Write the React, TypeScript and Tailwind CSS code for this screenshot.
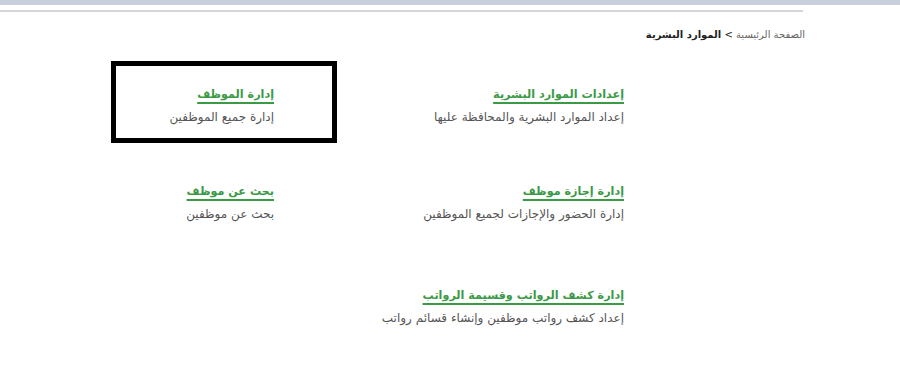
const ITEMS = [
  [
    { title: 'إعدادات الموارد البشرية', desc: 'إعداد الموارد البشرية والمحافظة عليها' },
    { title: 'إدارة الموظف', desc: 'إدارة جميع الموظفين', active: true },
  ],
  [
    { title: 'إدارة إجازة موظف', desc: 'إدارة الحضور والإجازات لجميع الموظفين' },
    { title: 'بحث عن موظف', desc: 'بحث عن موظفين' },
  ],
  [{ title: 'إدارة كشف الرواتب وقسيمة الرواتب', desc: 'إعداد كشف رواتب موظفين وإنشاء قسائم رواتب' }],
];

const ROW_GAPS = ['mt-0', 'mt-[15px]', 'mt-[22px]'];

type Item = { title: string; desc: string; active?: boolean };

function Cell({ item, wide }: { item: Item; wide?: boolean }) {
  return (
    <div
      className={`h-[82px] border-[5px] pt-[20px] ${item.active ? 'border-black' : 'border-transparent'} ${
        wide ? 'w-[292px]' : 'w-[226px] pr-[58px]'
      }`}
    >
      <a href="#" className="block text-[11.2px] leading-[18px] font-bold text-[#3a9a46] underline underline-offset-[4px] decoration-[1.5px] w-fit">
        {item.title}
      </a>
      <div className="mt-[4px] text-[12px] leading-[18px] text-[#555]">{item.desc}</div>
    </div>
  );
}

export default function App() {
  return (
    <div className="w-[900px] h-[365px] bg-white overflow-hidden" style={{ fontFamily: '"DejaVu Sans", Arial, sans-serif' }}>
      <div className="h-[5px] bg-[#c9cfdd]" />
      <div className="mt-[5px] h-[2px] w-[803px] bg-[#d6d6d6]" />
      <div dir="rtl" className="w-[805px]">
        <div className="pt-[15px] text-[10px] leading-[16px]">
          <span className="text-[#666]">الصفحة الرئيسية</span>
          <span className="text-[#222]"> &gt; </span>
          <span className="font-bold text-[#222]">الموارد البشرية</span>
        </div>
        <div className="mt-[18px] mr-[176px] flex flex-col">
          {ITEMS.map((row, i) => (
            <div key={i} className={`flex ${ROW_GAPS[i]}`}>
              {row.map((item, j) => (
                <Cell key={item.title} item={item} wide={j === 0} />
              ))}
            </div>
          ))}
        </div>
      </div>
    </div>
  );
}
